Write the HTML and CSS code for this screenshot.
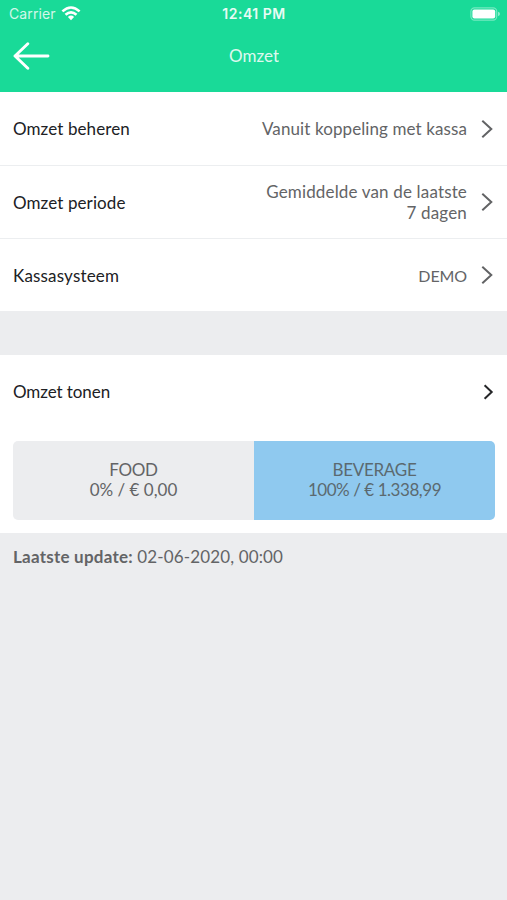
FILE: index.html
```html
<!DOCTYPE html>
<html lang="nl">
<head>
<meta charset="utf-8">
<meta name="viewport" content="width=device-width">
<title>Omzet</title>
<link rel="stylesheet" href="styles.css">
</head>
<body>
<header class="header">
  <div class="status">
    <div class="carrier"><span class="carrier-name">Carrier</span>
      <svg class="wifi" width="20" height="15" viewBox="0 0 20 15" fill="none" stroke="#fff" stroke-width="2.6"><path d="M1.4 5.4Q10-2.4 18.6 5.4"/><path d="M4.5 8.8Q10 3.8 15.5 8.8"/><path d="M6.9 11Q10 8.2 13.1 11L10 14.2Z" fill="#fff" stroke="none"/></svg>
    </div>
    <span class="time">12:41 PM</span>
    <svg class="battery" width="30" height="14" viewBox="0 0 30 14"><rect x=".9" y=".8" width="25.8" height="12.4" rx="3.6" fill="none" stroke="#fff" stroke-opacity=".4" stroke-width="1.2"/><rect x="2.4" y="2.4" width="22.8" height="9.2" rx="2" fill="#fff"/><path d="M28 4.8Q30 5.4 30 7T28 9.2Z" fill="#fff" fill-opacity=".5"/></svg>
  </div>
  <div class="navbar">
    <svg class="back" width="37" height="28" viewBox="0 0 37 28" fill="none" stroke="#fff" stroke-width="2.9" stroke-linecap="round" stroke-linejoin="round"><path d="M14.8 1.8L2 14L14.8 26.2M2 14H35"/></svg>
    <h1 class="title">Omzet</h1>
  </div>
</header>
<main>
  <section class="settings">
    <div class="row"><span class="label">Omzet beheren</span><span class="value">Vanuit koppeling met kassa</span><svg class="chevron" width="12" height="20" viewBox="0 0 12 20"><path d="M1.3 1.7L10.3 10L1.3 18.3"/></svg></div>
    <div class="row"><span class="label">Omzet periode</span><span class="value value-period">Gemiddelde van de laatste<br>7 dagen</span><svg class="chevron" width="12" height="20" viewBox="0 0 12 20"><path d="M1.3 1.7L10.3 10L1.3 18.3"/></svg></div>
    <div class="row"><span class="label label-system">Kassasysteem</span><span class="value value-system">DEMO</span><svg class="chevron" width="12" height="20" viewBox="0 0 12 20"><path d="M1.3 1.7L10.3 10L1.3 18.3"/></svg></div>
  </section>
  <section class="revenue">
    <div class="row row-show"><span class="label label-show">Omzet tonen</span><svg class="chevron chevron-dark" width="11" height="16" viewBox="0 0 11 16"><path d="M1.6 1.2L8.7 8L1.6 14.8"/></svg></div>
    <div class="split">
      <div class="part food"><span class="name">FOOD</span><span class="amount">0% / € 0,00</span></div>
      <div class="part beverage"><span class="name">BEVERAGE</span><span class="amount amount-long">100% / € 1.338,99</span></div>
    </div>
  </section>
  <p class="updated"><strong>Laatste update:</strong> <span class="date">02-06-2020, 00:00</span></p>
</main>
</body>
</html>
```
FILE: styles.css
```css
* { box-sizing: border-box; }
body {
  margin: 0;
  min-height: 900px;
  background: #ecedef;
  color: #636466;
  font: 17px/21px Lato, "Liberation Sans", sans-serif;
}
.header { height: 92px; background: #19da98; color: #fff; }
.status {
  display: grid;
  grid-template-columns: 1fr auto 1fr;
  align-items: center;
  height: 27px;
  padding: 0 7px 0 9px;
  font: 14px/18px Inter, sans-serif;
}
.carrier { display: flex; align-items: center; gap: 5px; }
.carrier-name { opacity: .8; letter-spacing: .1px; }
.time { font-weight: 600; font-size: 14px; letter-spacing: .5px; margin-right: 1px; opacity: .9; }
.battery { justify-self: end; }
.navbar {
  display: grid;
  grid-template-columns: 37px 1fr 37px;
  align-items: center;
  height: 58px;
  padding: 0 12px 0 13px;
}
.title { margin: 0; padding-bottom: 2px; font-size: 17px; font-weight: 400; text-align: center; opacity: .85; }
.settings, .revenue { background: #fff; }
.row {
  display: flex;
  align-items: center;
  height: 73px;
  padding: 0 14px 0 13px;
}
.row + .row { border-top: 1px solid #eceef0; }
.row-show { padding-right: 13px; }
.label { color: #202124; letter-spacing: .1px; white-space: nowrap; }
.label-system { letter-spacing: .18px; }
.label-show { letter-spacing: -.08px; }
.value { margin-left: auto; margin-right: 14px; text-align: right; letter-spacing: .1px; white-space: nowrap; }
.value-period { letter-spacing: .16px; }
.value-system { font-size: 16px; letter-spacing: -.1px; }
.chevron { fill: none; stroke: #626365; stroke-width: 2; }
.chevron-dark { margin-left: auto; stroke: #252628; }
.revenue { margin-top: 44px; height: 178px; }
.settings { height: 219px; }
.split {
  display: grid;
  grid-template-columns: 1fr 1fr;
  height: 79px;
  margin: 13px 12px 0 13px;
  border-radius: 5px;
  overflow: hidden;
}
.part {
  display: flex;
  flex-direction: column;
  align-items: center;
  justify-content: center;
  padding-bottom: 2px;
  line-height: 20px;
}
.name { letter-spacing: -.3px; }
.amount-long { letter-spacing: -.45px; }
.food { background: #ecedef; }
.beverage { background: #8fc9ef; color: #5b6970; }
.updated { margin: 0; padding: 13px 13px; }
.updated strong { letter-spacing: .23px; }
.date { letter-spacing: .15px; }
```
